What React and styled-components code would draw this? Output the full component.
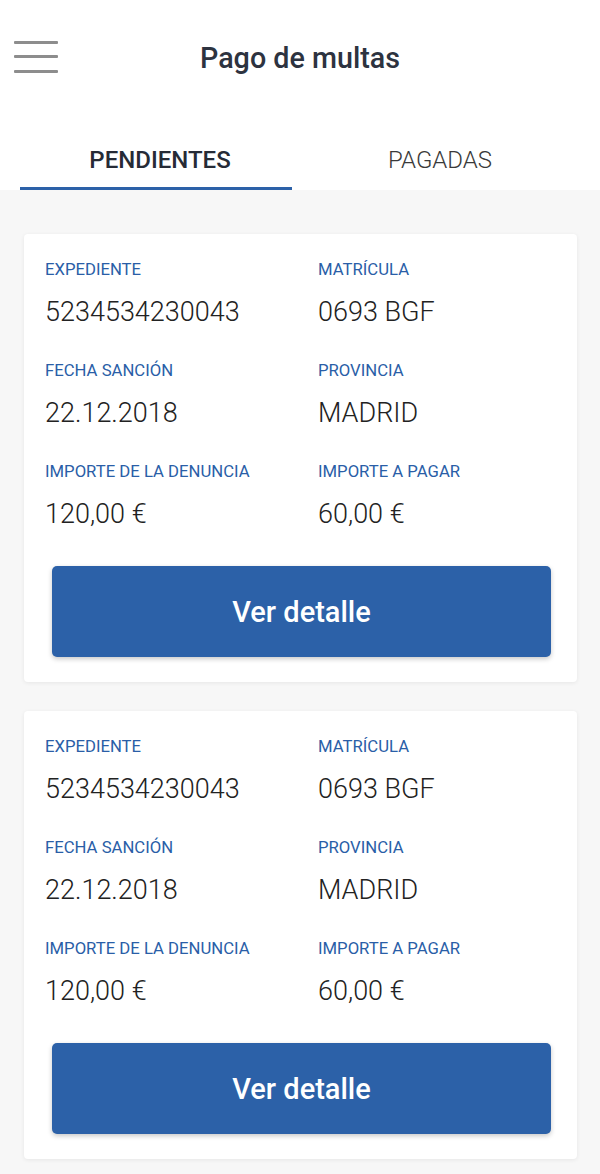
import styled, { createGlobalStyle } from "styled-components"

const GlobalStyle = createGlobalStyle`
    body {
        margin: 0;
        background-color: #f7f7f7;
        font-family: Roboto, "Liberation Sans", sans-serif;
    }
`

const Page = styled.div`
    width: 100%;
    min-height: 1174px;
    background-color: #f7f7f7;
`

const Header = styled.header`
    background-color: white;
`

const TopBar = styled.div`
    height: 116px;
    display: grid;
    grid-template-columns: 1fr auto 1fr;
    align-items: center;
    padding: 0 14px;
    box-sizing: border-box;
`

const Burger = styled.div`
    width: 44px;
    display: flex;
    flex-direction: column;
    row-gap: 11.5px;
    margin-top: -3px;

    &>span{
        display: block;
        height: 3px;
        border-radius: 1px;
        background-color: #8d8d8d;
    }
`

const Title = styled.h1`
    margin: 0;
    font-size: 28.7px;
    font-weight: 500;
    color: #2d3340;
`

const Tabs = styled.nav`
    display: flex;
    padding: 0 20px;
`

const Tab = styled.div`
    flex: 1;
    display: flex;
    flex-direction: column;
`

const TabLabel = styled.span`
    padding: 30px 0 13px 0;
    line-height: 28px;
    text-align: center;
    font-size: 24px;
    font-weight: ${({active}) => active ? 500 : 300};
    color: ${({active}) => active ? "#262b36" : "#3a3a3a"};
`

const Indicator = styled.div`
    height: 3px;
    margin-right: 8px;
    background-color: ${({active}) => active ? "#2c61a8" : "transparent"};
`

const List = styled.main`
    display: flex;
    flex-direction: column;
    row-gap: 29px;
    padding: 44px 23px 14px 24px;
`

const Card = styled.section`
    background-color: white;
    border-radius: 4px;
    box-shadow: 0 1px 4px rgba(0, 0, 0, 0.07);
    padding: 26px 26px 25px 21px;
`

const Fields = styled.div`
    display: grid;
    grid-template-columns: 273px 1fr;
    row-gap: 34px;
`

const Field = styled.div`
    display: flex;
    flex-direction: column;
    row-gap: 17px;
`

const Label = styled.span`
    font-size: 16.7px;
    line-height: 20px;
    color: #2a5ea7;
    font-weight: 400;
`

const Value = styled.span`
    font-size: 27px;
    line-height: 30px;
    color: #222;
    font-weight: 300;
`

const Button = styled.button`
    display: block;
    width: calc(100% - 7px);
    height: 91px;
    margin: 37px 0 0 7px;
    border: none;
    border-radius: 5px;
    background-color: #2c61a8;
    box-shadow: 0 2px 5px rgba(0, 0, 0, 0.22);
    color: white;
    font-family: Roboto, "Liberation Sans", sans-serif;
    font-size: 29px;
    font-weight: 500;
    cursor: pointer;
`

const multas = [
    {expediente: "5234534230043", matricula: "0693 BGF", fecha: "22.12.2018", provincia: "MADRID", denuncia: "120,00 €", pagar: "60,00 €"},
    {expediente: "5234534230043", matricula: "0693 BGF", fecha: "22.12.2018", provincia: "MADRID", denuncia: "120,00 €", pagar: "60,00 €"},
]

const App = () => {
    return <Page>
        <GlobalStyle />
        <Header>
            <TopBar>
                <Burger><span></span><span></span><span></span></Burger>
                <Title>Pago de multas</Title>
                <div></div>
            </TopBar>
            <Tabs>
                <Tab>
                    <TabLabel active>PENDIENTES</TabLabel>
                    <Indicator active />
                </Tab>
                <Tab>
                    <TabLabel>PAGADAS</TabLabel>
                    <Indicator />
                </Tab>
            </Tabs>
        </Header>

        <List>
        {
            multas.map((m, index) => {
                const campos = [
                    ["EXPEDIENTE", m.expediente], ["MATRÍCULA", m.matricula],
                    ["FECHA SANCIÓN", m.fecha], ["PROVINCIA", m.provincia],
                    ["IMPORTE DE LA DENUNCIA", m.denuncia], ["IMPORTE A PAGAR", m.pagar],
                ]
                return <Card key={index}>
                    <Fields>
                    {
                        campos.map(([label, value]) =>
                            <Field key={label}>
                                <Label>{ label }</Label>
                                <Value>{ value }</Value>
                            </Field>
                        )
                    }
                    </Fields>
                    <Button>Ver detalle</Button>
                </Card>
            })
        }
        </List>
    </Page>
}

export default App
